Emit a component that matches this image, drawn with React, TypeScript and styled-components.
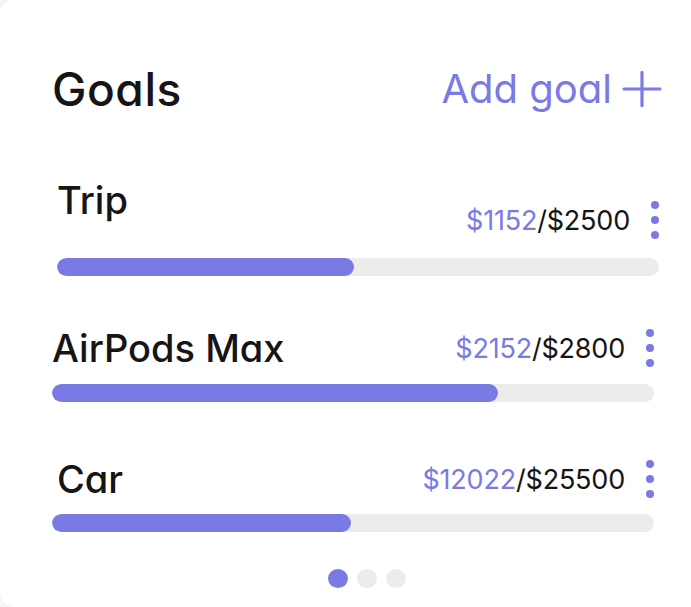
import React from "react";
import styled, { createGlobalStyle } from "styled-components";

const Global = createGlobalStyle`
  html, body { margin: 0; padding: 0; }
  body {
    background: #f5f5fb;
    font-family: Inter, "Noto Sans", sans-serif;
    font-feature-settings: "cv11" 1;
    -webkit-font-smoothing: antialiased;
  }
`;

const PURPLE = "#7a7ae4";
const INK = "#161414";
const TRACK = "#ececec";

const Card = styled.div`
  box-sizing: border-box;
  width: 691px;
  height: 607px;
  background: #ffffff;
  border-radius: 14px 0 0 14px;
  padding: 66px 36px 0 52px;
  display: flex;
  flex-direction: column;
`;

const Header = styled.div`
  display: flex;
  align-items: center;
  justify-content: space-between;
  margin-right: -7px;
`;

const Title = styled.h1`
  margin: 0;
  font-size: 46px;
  line-height: 1;
  font-weight: 500;
  color: ${INK};
  letter-spacing: 0.6px;
`;

const AddButton = styled.button`
  display: flex;
  align-items: center;
  gap: 10px;
  border: none;
  background: none;
  padding: 0;
  font-family: inherit;
  font-feature-settings: "cv11" 1;
  font-size: 40px;
  line-height: 1;
  font-weight: 400;
  color: ${PURPLE};
  cursor: pointer;
`;

const GoalList = styled.div`
  display: flex;
  flex-direction: column;
  margin-top: 69px;
`;

const Goal = styled.div<{ $shift: number; $top: number }>`
  display: flex;
  flex-direction: column;
  margin-top: ${(p) => p.$top}px;
  margin-left: ${(p) => p.$shift}px;
  margin-right: ${(p) => -p.$shift + 1}px;
`;

const GoalHeader = styled.div`
  display: flex;
  align-items: flex-end;
  justify-content: space-between;
`;

const GoalName = styled.div<{ $lift: number; $indent: number }>`
  font-size: 38px;
  line-height: 1;
  font-weight: 500;
  color: ${INK};
  margin-bottom: ${(p) => p.$lift}px;
  margin-left: ${(p) => p.$indent}px;
`;

const RightGroup = styled.div`
  display: flex;
  align-items: center;
  gap: 21px;
  height: 38px;
`;

const Amount = styled.div`
  font-size: 27px;
  line-height: 1;
  font-weight: 400;
  color: ${INK};
  letter-spacing: -0.2px;
`;

const Saved = styled.span`
  color: ${PURPLE};
`;

const MenuDots = styled.div`
  display: flex;
  flex-direction: column;
  gap: 7px;
`;

const MenuDot = styled.span`
  width: 8px;
  height: 8px;
  border-radius: 50%;
  background: ${PURPLE};
`;

const Track = styled.div<{ $gap: number }>`
  height: 18px;
  border-radius: 9px;
  background: ${TRACK};
  margin-top: ${(p) => p.$gap}px;
  overflow: hidden;
`;

const Fill = styled.div`
  height: 100%;
  border-radius: 9px;
  background: ${PURPLE};
`;

const Pager = styled.div`
  display: flex;
  justify-content: center;
  gap: 9px;
  margin-top: 37px;
  margin-left: 27px;
`;

const PageDot = styled.span<{ $active?: boolean }>`
  width: 20px;
  height: 19px;
  border-radius: 50%;
  background: ${(p) => (p.$active ? PURPLE : TRACK)};
`;

const PlusIcon = () => (
  <svg width="40" height="36" viewBox="0 0 40 36" fill="none">
    <path d="M20 1.5V34.5M2 18H38" stroke={PURPLE} strokeWidth="3.2" strokeLinecap="round" />
  </svg>
);

type GoalData = {
  name: string;
  saved: number;
  target: number;
  pct: number;
  shift: number;
  indent: number;
  lift: number;
  gap: number;
  top: number;
};

const goals: GoalData[] = [
  { name: "Trip", saved: 1152, target: 2500, pct: 49.3, shift: 5, indent: 0, lift: 20, gap: 19, top: 0 },
  { name: "AirPods Max", saved: 2152, target: 2800, pct: 74.1, shift: 0, indent: 0, lift: 0, gap: 17, top: 53 },
  { name: "Car", saved: 12022, target: 25500, pct: 49.6, shift: 0, indent: 5, lift: 0, gap: 16, top: 58 },
];

export default function App() {
  return (
    <>
      <Global />
      <Card>
        <Header>
          <Title>Goals</Title>
          <AddButton>
            Add goal
            <PlusIcon />
          </AddButton>
        </Header>
        <GoalList>
          {goals.map((g) => (
            <Goal key={g.name} $shift={g.shift} $top={g.top}>
              <GoalHeader>
                <GoalName $lift={g.lift} $indent={g.indent}>
                  {g.name}
                </GoalName>
                <RightGroup>
                  <Amount>
                    <Saved>${g.saved}</Saved>/${g.target}
                  </Amount>
                  <MenuDots>
                    <MenuDot />
                    <MenuDot />
                    <MenuDot />
                  </MenuDots>
                </RightGroup>
              </GoalHeader>
              <Track $gap={g.gap}>
                <Fill style={{ width: `${g.pct}%` }} />
              </Track>
            </Goal>
          ))}
        </GoalList>
        <Pager>
          <PageDot $active />
          <PageDot />
          <PageDot />
        </Pager>
      </Card>
    </>
  );
}
